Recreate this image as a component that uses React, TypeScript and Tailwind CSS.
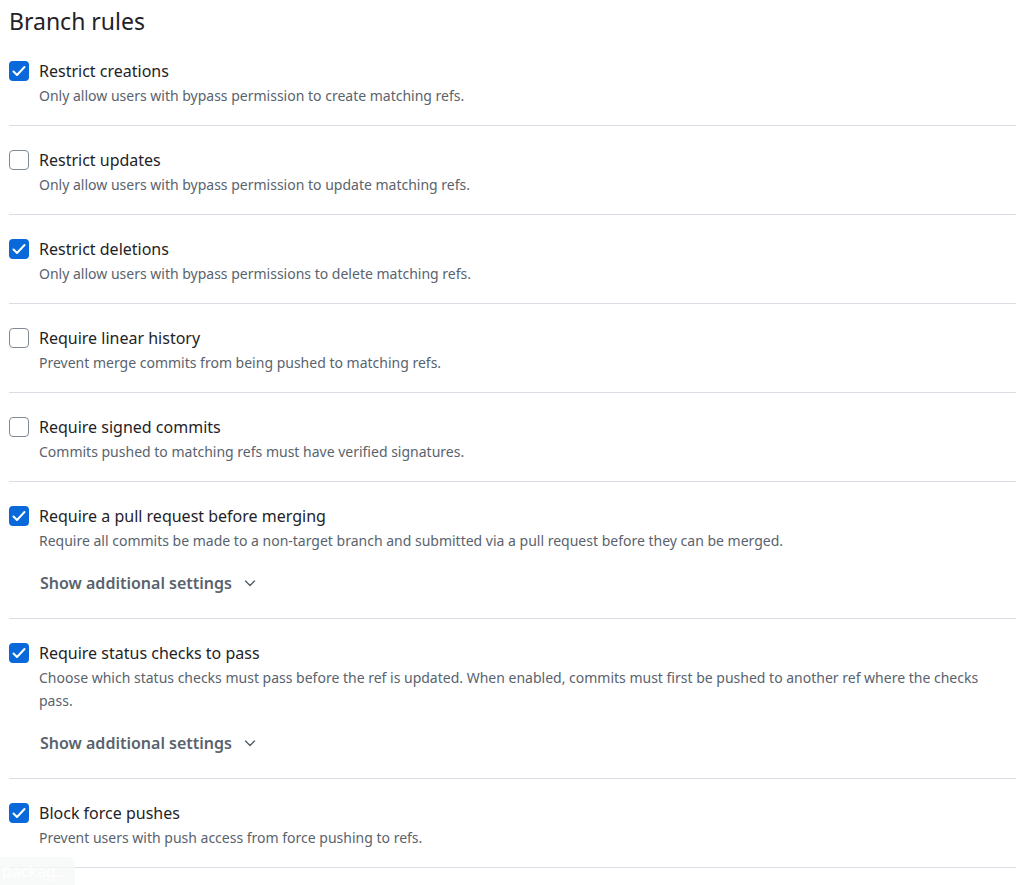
import { useState } from "react";

type Rule = {
  id: string;
  title: string;
  description: string;
  checked: boolean;
  extra?: boolean;
};

const initialRules: Rule[] = [
  {
    id: "creations",
    title: "Restrict creations",
    description: "Only allow users with bypass permission to create matching refs.",
    checked: true,
  },
  {
    id: "updates",
    title: "Restrict updates",
    description: "Only allow users with bypass permission to update matching refs.",
    checked: false,
  },
  {
    id: "deletions",
    title: "Restrict deletions",
    description: "Only allow users with bypass permissions to delete matching refs.",
    checked: true,
  },
  {
    id: "linear",
    title: "Require linear history",
    description: "Prevent merge commits from being pushed to matching refs.",
    checked: false,
  },
  {
    id: "signed",
    title: "Require signed commits",
    description: "Commits pushed to matching refs must have verified signatures.",
    checked: false,
  },
  {
    id: "pr",
    title: "Require a pull request before merging",
    description:
      "Require all commits be made to a non-target branch and submitted via a pull request before they can be merged.",
    checked: true,
    extra: true,
  },
  {
    id: "status",
    title: "Require status checks to pass",
    description:
      "Choose which status checks must pass before the ref is updated. When enabled, commits must first be pushed to another ref where the checks pass.",
    checked: true,
    extra: true,
  },
  {
    id: "force",
    title: "Block force pushes",
    description: "Prevent users with push access from force pushing to refs.",
    checked: true,
  },
];

const Checkbox = ({ checked, onToggle }: { checked: boolean; onToggle: () => void }) => (
  <button
    type="button"
    onClick={onToggle}
    className={
      checked
        ? "flex h-5 w-5 shrink-0 items-center justify-center rounded-[4px] bg-[#0969da]"
        : "flex h-5 w-5 shrink-0 items-center justify-center rounded-[4px] border border-[#818b98] bg-white"
    }
  >
    {checked && (
      <svg width="16" height="16" viewBox="0 0 16 16" fill="none">
        <path d="M2.5 8.5l3.5 3.5 7.5-8" stroke="white" strokeWidth="2" strokeLinecap="round" strokeLinejoin="round" />
      </svg>
    )}
  </button>
);

const App = () => {
  const [rules, setRules] = useState(initialRules);

  const toggle = (id: string) => {
    setRules(rules.map((r) => (r.id === id ? { ...r, checked: !r.checked } : r)));
  };

  return (
    <div className="relative min-h-screen bg-white font-['Segoe_UI','Noto_Sans',sans-serif] text-[#1f2328]">
      <div className="w-[1007px] ml-[9px]">
        <h1 className="pt-[5px] text-[23px] leading-8 font-normal">Branch rules</h1>

        {rules.map((rule) => (
          <div key={rule.id} className="border-b border-[#d8dee4] pt-6 pb-[18px]">
            <div className="flex items-center gap-[10px]">
              <Checkbox checked={rule.checked} onToggle={() => toggle(rule.id)} />
              <span className="text-base leading-5">{rule.title}</span>
            </div>
            <p className="mt-[3px] pl-[30px] pr-6 text-sm leading-[23px] text-[#59636e]">{rule.description}</p>
            {rule.extra && (
              <button
                type="button"
                className="mt-[19px] mb-[5px] ml-[31px] flex h-6 items-center gap-[10px] text-base font-semibold text-[#59636e]"
              >
                Show additional settings
                <svg width="16" height="16" viewBox="0 0 16 16" fill="none">
                  <path d="M3.5 6l4.5 4.5L12.5 6" stroke="#59636e" strokeWidth="1.5" strokeLinecap="round" strokeLinejoin="round" />
                </svg>
              </button>
            )}
          </div>
        ))}
      </div>

      <div className="absolute left-0 top-[857px] h-7 w-[75px] rounded-tr-md bg-[#f6f7f8]/80 px-[2px] text-base leading-7 text-white">
        packag...
      </div>
    </div>
  );
};

export default App;
